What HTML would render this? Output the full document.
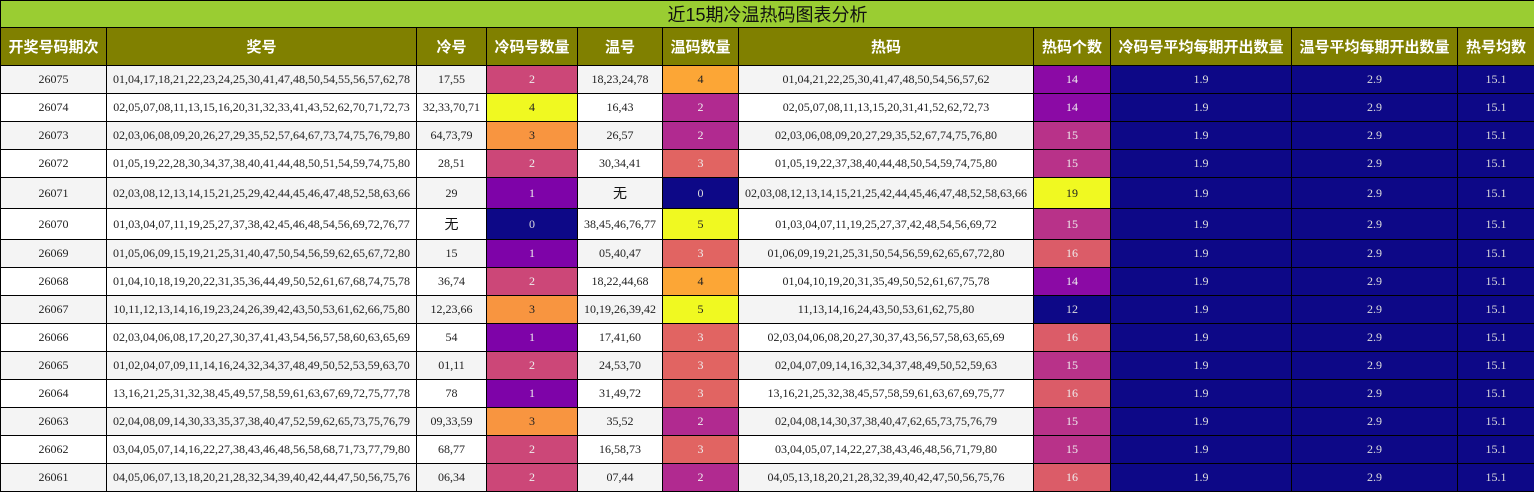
<!DOCTYPE html>
<html><head><meta charset="utf-8"><style>
body{margin:0;background:#fff;width:1534px;height:492px;overflow:hidden}
table{border-collapse:collapse;table-layout:fixed;width:1534px;font-family:"Liberation Serif","Noto Sans CJK SC",serif;font-size:12px;color:#222}
td,th{border:1px solid #000;text-align:center;padding:0;white-space:nowrap;overflow:hidden}
.t td{background:#9acd32;font-family:"Liberation Sans","Noto Sans CJK SC",sans-serif;font-size:18px;height:26px;color:#111}
th{background:#808000;color:#fff;font-family:"Liberation Sans","Noto Sans CJK SC",sans-serif;font-size:15px;font-weight:bold;height:37px}
tr.r td{height:27px}
tr.tall td{height:30px}
tr.r td{background:#fff}
tr.r:nth-child(odd) td{background:#f4f4f4}
td.c{color:#eee}
td.n{background:#0d0887!important;color:#ddd}
.w{font-family:"Noto Sans CJK SC",sans-serif;font-size:14px;color:#111}
</style></head><body>
<table>
<colgroup><col style="width:106px"><col style="width:310px"><col style="width:70px"><col style="width:91px"><col style="width:85px"><col style="width:76px"><col style="width:295px"><col style="width:77px"><col style="width:181px"><col style="width:166px"><col style="width:77px"></colgroup>
<tr class="t"><td colspan="11">近15期冷温热码图表分析</td></tr>
<tr><th>开奖号码期次</th><th>奖号</th><th>冷号</th><th>冷码号数量</th><th>温号</th><th>温码数量</th><th>热码</th><th>热码个数</th><th>冷码号平均每期开出数量</th><th>温号平均每期开出数量</th><th>热号均数</th></tr>
<tr class="r"><td>26075</td><td>01,04,17,18,21,22,23,24,25,30,41,47,48,50,54,55,56,57,62,78</td><td>17,55</td><td class="c" style="background:#cc4778">2</td><td>18,23,24,78</td><td style="background:#fca636">4</td><td>01,04,21,22,25,30,41,47,48,50,54,56,57,62</td><td class="c" style="background:#8b0aa5">14</td><td class="n">1.9</td><td class="n">2.9</td><td class="n">15.1</td></tr>
<tr class="r"><td>26074</td><td>02,05,07,08,11,13,15,16,20,31,32,33,41,43,52,62,70,71,72,73</td><td>32,33,70,71</td><td style="background:#f0f921">4</td><td>16,43</td><td class="c" style="background:#b12a90">2</td><td>02,05,07,08,11,13,15,20,31,41,52,62,72,73</td><td class="c" style="background:#8b0aa5">14</td><td class="n">1.9</td><td class="n">2.9</td><td class="n">15.1</td></tr>
<tr class="r"><td>26073</td><td>02,03,06,08,09,20,26,27,29,35,52,57,64,67,73,74,75,76,79,80</td><td>64,73,79</td><td style="background:#f89540">3</td><td>26,57</td><td class="c" style="background:#b12a90">2</td><td>02,03,06,08,09,20,27,29,35,52,67,74,75,76,80</td><td class="c" style="background:#b83289">15</td><td class="n">1.9</td><td class="n">2.9</td><td class="n">15.1</td></tr>
<tr class="r"><td>26072</td><td>01,05,19,22,28,30,34,37,38,40,41,44,48,50,51,54,59,74,75,80</td><td>28,51</td><td class="c" style="background:#cc4778">2</td><td>30,34,41</td><td class="c" style="background:#e16462">3</td><td>01,05,19,22,37,38,40,44,48,50,54,59,74,75,80</td><td class="c" style="background:#b83289">15</td><td class="n">1.9</td><td class="n">2.9</td><td class="n">15.1</td></tr>
<tr class="r tall"><td>26071</td><td>02,03,08,12,13,14,15,21,25,29,42,44,45,46,47,48,52,58,63,66</td><td>29</td><td class="c" style="background:#7e03a8">1</td><td class="w">无</td><td class="n">0</td><td>02,03,08,12,13,14,15,21,25,42,44,45,46,47,48,52,58,63,66</td><td style="background:#f0f921">19</td><td class="n">1.9</td><td class="n">2.9</td><td class="n">15.1</td></tr>
<tr class="r tall"><td>26070</td><td>01,03,04,07,11,19,25,27,37,38,42,45,46,48,54,56,69,72,76,77</td><td class="w">无</td><td class="n">0</td><td>38,45,46,76,77</td><td style="background:#f0f921">5</td><td>01,03,04,07,11,19,25,27,37,42,48,54,56,69,72</td><td class="c" style="background:#b83289">15</td><td class="n">1.9</td><td class="n">2.9</td><td class="n">15.1</td></tr>
<tr class="r"><td>26069</td><td>01,05,06,09,15,19,21,25,31,40,47,50,54,56,59,62,65,67,72,80</td><td>15</td><td class="c" style="background:#7e03a8">1</td><td>05,40,47</td><td class="c" style="background:#e16462">3</td><td>01,06,09,19,21,25,31,50,54,56,59,62,65,67,72,80</td><td class="c" style="background:#db5c68">16</td><td class="n">1.9</td><td class="n">2.9</td><td class="n">15.1</td></tr>
<tr class="r"><td>26068</td><td>01,04,10,18,19,20,22,31,35,36,44,49,50,52,61,67,68,74,75,78</td><td>36,74</td><td class="c" style="background:#cc4778">2</td><td>18,22,44,68</td><td style="background:#fca636">4</td><td>01,04,10,19,20,31,35,49,50,52,61,67,75,78</td><td class="c" style="background:#8b0aa5">14</td><td class="n">1.9</td><td class="n">2.9</td><td class="n">15.1</td></tr>
<tr class="r"><td>26067</td><td>10,11,12,13,14,16,19,23,24,26,39,42,43,50,53,61,62,66,75,80</td><td>12,23,66</td><td style="background:#f89540">3</td><td>10,19,26,39,42</td><td style="background:#f0f921">5</td><td>11,13,14,16,24,43,50,53,61,62,75,80</td><td class="n">12</td><td class="n">1.9</td><td class="n">2.9</td><td class="n">15.1</td></tr>
<tr class="r"><td>26066</td><td>02,03,04,06,08,17,20,27,30,37,41,43,54,56,57,58,60,63,65,69</td><td>54</td><td class="c" style="background:#7e03a8">1</td><td>17,41,60</td><td class="c" style="background:#e16462">3</td><td>02,03,04,06,08,20,27,30,37,43,56,57,58,63,65,69</td><td class="c" style="background:#db5c68">16</td><td class="n">1.9</td><td class="n">2.9</td><td class="n">15.1</td></tr>
<tr class="r"><td>26065</td><td>01,02,04,07,09,11,14,16,24,32,34,37,48,49,50,52,53,59,63,70</td><td>01,11</td><td class="c" style="background:#cc4778">2</td><td>24,53,70</td><td class="c" style="background:#e16462">3</td><td>02,04,07,09,14,16,32,34,37,48,49,50,52,59,63</td><td class="c" style="background:#b83289">15</td><td class="n">1.9</td><td class="n">2.9</td><td class="n">15.1</td></tr>
<tr class="r"><td>26064</td><td>13,16,21,25,31,32,38,45,49,57,58,59,61,63,67,69,72,75,77,78</td><td>78</td><td class="c" style="background:#7e03a8">1</td><td>31,49,72</td><td class="c" style="background:#e16462">3</td><td>13,16,21,25,32,38,45,57,58,59,61,63,67,69,75,77</td><td class="c" style="background:#db5c68">16</td><td class="n">1.9</td><td class="n">2.9</td><td class="n">15.1</td></tr>
<tr class="r"><td>26063</td><td>02,04,08,09,14,30,33,35,37,38,40,47,52,59,62,65,73,75,76,79</td><td>09,33,59</td><td style="background:#f89540">3</td><td>35,52</td><td class="c" style="background:#b12a90">2</td><td>02,04,08,14,30,37,38,40,47,62,65,73,75,76,79</td><td class="c" style="background:#b83289">15</td><td class="n">1.9</td><td class="n">2.9</td><td class="n">15.1</td></tr>
<tr class="r"><td>26062</td><td>03,04,05,07,14,16,22,27,38,43,46,48,56,58,68,71,73,77,79,80</td><td>68,77</td><td class="c" style="background:#cc4778">2</td><td>16,58,73</td><td class="c" style="background:#e16462">3</td><td>03,04,05,07,14,22,27,38,43,46,48,56,71,79,80</td><td class="c" style="background:#b83289">15</td><td class="n">1.9</td><td class="n">2.9</td><td class="n">15.1</td></tr>
<tr class="r"><td>26061</td><td>04,05,06,07,13,18,20,21,28,32,34,39,40,42,44,47,50,56,75,76</td><td>06,34</td><td class="c" style="background:#cc4778">2</td><td>07,44</td><td class="c" style="background:#b12a90">2</td><td>04,05,13,18,20,21,28,32,39,40,42,47,50,56,75,76</td><td class="c" style="background:#db5c68">16</td><td class="n">1.9</td><td class="n">2.9</td><td class="n">15.1</td></tr>
</table>
</body></html>
